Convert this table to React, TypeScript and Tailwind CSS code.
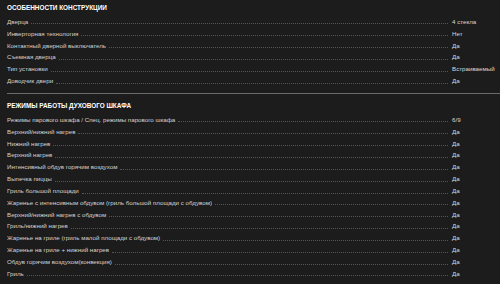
const construction: [string, string][] = [
  ["Дверца", "4 стекла"],
  ["Инверторная технология", "Нет"],
  ["Контактный дверной выключатель", "Да"],
  ["Съемная дверца", "Да"],
  ["Тип установки", "Встраиваемый"],
  ["Доводчик двери", "Да"],
];

const modes: [string, string][] = [
  ["Режимы парового шкафа / Спец. режимы парового шкафа", "6/9"],
  ["Верхний/нижний нагрев", "Да"],
  ["Нижний нагрев", "Да"],
  ["Верхний нагрев", "Да"],
  ["Интенсивный обдув горячим воздухом", "Да"],
  ["Выпечка пиццы", "Да"],
  ["Гриль большой площади", "Да"],
  ["Жаренье с интенсивным обдувом (гриль большой площади с обдувом)", "Да"],
  ["Верхний/нижний нагрев с обдувом", "Да"],
  ["Гриль/нижний нагрев", "Да"],
  ["Жаренье на гриле (гриль малой площади с обдувом)", "Да"],
  ["Жаренье на гриле + нижний нагрев", "Да"],
  ["Обдув горячим воздухом(конвекция)", "Да"],
  ["Гриль", "Да"],
];

function Row({ label, value }: { label: string; value: string }) {
  return (
    <div className="flex h-[11.85px] items-center">
      <div className="flex flex-1 items-center">
        <span className="whitespace-nowrap text-[#d2d2d2]">{label}</span>
        <span className="ml-[3px] mr-[4px] mt-[4px] flex-1 border-b border-dotted border-[#555]" />
      </div>
      <span className="w-[48px] whitespace-nowrap text-[#d8d8d8]">{value}</span>
    </div>
  );
}

function Section({ title, rows }: { title: string; rows: [string, string][] }) {
  return (
    <section>
      <h2 className="mb-[2px] flex h-[12px] items-center text-[6.4px] font-bold uppercase text-white">{title}</h2>
      <div className="flex flex-col">
        {rows.map(([l, v]) => (
          <Row key={l} label={l} value={v} />
        ))}
      </div>
    </section>
  );
}

export default function App() {
  return (
    <div
      className="h-[284px] w-[500px] overflow-hidden bg-[#1c1c1c] pl-[7px] pt-[2px] text-[6.2px] leading-none"
      style={{ fontFamily: '"Liberation Sans", Arial, sans-serif' }}
    >
      <Section title="Особенности конструкции" rows={construction} />
      <div className="mb-[6px] mt-[6px] h-px bg-[#6a6a6a]" />
      <Section title="Режимы работы духового шкафа" rows={modes} />
    </div>
  );
}
